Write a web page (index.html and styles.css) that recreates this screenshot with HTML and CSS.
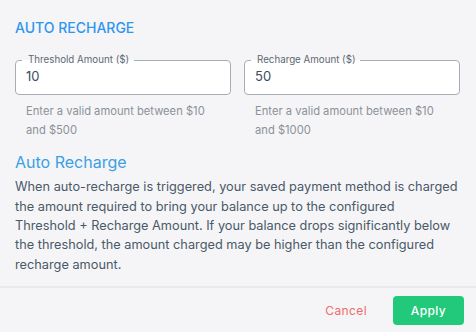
FILE: index.html
```html
<!DOCTYPE html>
<html>
<head>
<meta charset="utf-8">
<title>Auto Recharge</title>
<link rel="stylesheet" href="styles.css">
</head>
<body>
<div class="dialog">
  <div class="content">
    <h2 class="section-title">AUTO RECHARGE</h2>
    <div class="fields">
      <div class="field">
        <fieldset class="outline">
          <legend>Threshold Amount ($)</legend>
          <input class="amount" type="text" value="10">
        </fieldset>
        <p class="helper">Enter a valid amount between $10 and $500</p>
      </div>
      <div class="field">
        <fieldset class="outline">
          <legend>Recharge Amount ($)</legend>
          <input class="amount" type="text" value="50">
        </fieldset>
        <p class="helper">Enter a valid amount between $10 and $1000</p>
      </div>
    </div>
    <h3 class="info-title">Auto Recharge</h3>
    <p class="info-text">When auto-recharge is triggered, your saved payment method is charged the amount required to bring your balance up to the configured Threshold&nbsp;+ Recharge Amount. If your balance drops significantly below the threshold, the amount charged may be higher than the configured recharge amount.</p>
  </div>
  <div class="actions">
    <button class="btn-cancel" type="button">Cancel</button>
    <button class="btn-apply" type="button">Apply</button>
  </div>
</div>
</body>
</html>
```

FILE: styles.css
```css
/* Auto recharge dialog */

html, body
{ margin: 0;
padding: 0;
background-color: #f5f5f7;
}

body
{ font-family: Inter, "Noto Sans", sans-serif;
color: #4a5968;
}

div.dialog
{ width: 476px;
height: 332px;
display: flex;
flex-direction: column;
}

div.content
{ padding: 18px 15px 0 15px;
flex: 1;
}

h2.section-title
{ margin: 0;
font-size: 14px;
font-weight: 500;
line-height: 20px;
color: #2f96ee;
}

div.fields
{ display: grid;
grid-template-columns: 216px 216px;
column-gap: 13px;
margin-top: 16px;
}

fieldset.outline
{ margin: 0;
padding: 0 10px 0 6px;
border: 1px solid #a6adb5;
border-radius: 4px;
background-color: #ffffff;
height: 41px;
box-sizing: border-box;
}

fieldset.outline legend
{ padding: 0 5px 0 6px;
font-size: 9.75px;
line-height: 12px;
color: #5d6873;
}

input.amount
{ display: block;
border: none;
outline: none;
background: transparent;
padding: 0 0 0 4px;
margin: 2px 0 0 0;
width: 100%;
box-sizing: border-box;
font-family: inherit;
font-size: 13px;
line-height: 16px;
color: #3c4d5c;
}

p.helper
{ margin: 7px 14px 0 11px;
font-size: 11.2px;
line-height: 18.7px;
color: #8c9299;
}

h3.info-title
{ margin: 12px 0 0 0;
font-size: 16px;
font-weight: 400;
line-height: 22px;
color: #3aa0e4;
}

p.info-text
{ margin: 4px 0 0 0;
font-size: 12.75px;
line-height: 19.3px;
color: #4a5968;
}

div.actions
{ border-top: 2px solid #e9e9ee;
display: flex;
justify-content: flex-end;
align-items: center;
gap: 26px;
padding: 8px 12px 7px 0;
}

button.btn-cancel
{ border: none;
background: none;
padding: 0;
font-family: inherit;
font-size: 12px;
letter-spacing: 0.4px;
color: #f26b6b;
}

button.btn-apply
{ border: none;
border-radius: 4px;
background-color: #22c97b;
color: #ffffff;
width: 71px;
height: 29px;
font-family: inherit;
font-size: 12px;
font-weight: 500;
letter-spacing: 0.4px;
}
```
